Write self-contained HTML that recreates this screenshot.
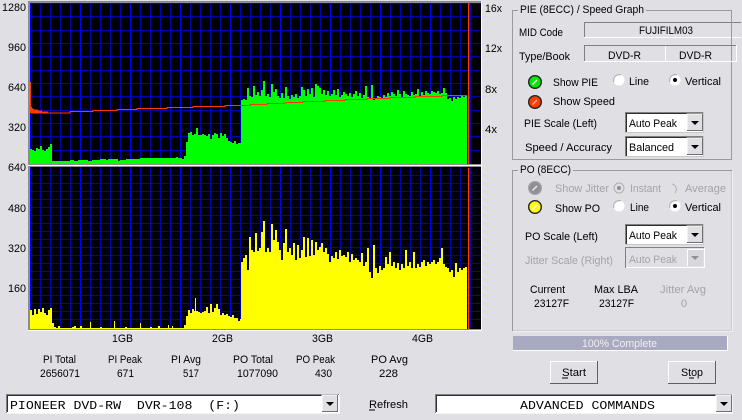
<!DOCTYPE html>
<html><head><meta charset="utf-8"><style>
html,body{margin:0;padding:0;background:#E0DFE3;width:742px;height:420px;overflow:hidden}
svg{display:block}
text{font-family:"Liberation Sans",Arial,sans-serif;font-size:11px;fill:#000}
.g{fill:#a4a4a8}
.m{font-family:"Liberation Mono","Courier New",monospace;font-size:12px}
</style></head><body>
<svg width="742" height="420" viewBox="0 0 742 420" xmlns="http://www.w3.org/2000/svg">
<defs>
<g id="arrow"><path d="M0 0h8l-4 4z" fill="#000"/></g>
<g id="btn"><rect width="16" height="17" fill="#E0DFE3"/><path d="M0 17V0h16" fill="none" stroke="#fff"/><path d="M0 16.5h15.5V0" fill="none" stroke="#707070"/><use href="#arrow" x="4" y="7"/></g>
<g id="combo"><rect width="79" height="21" fill="#fff"/><path d="M.5 21V.5H79" fill="none" stroke="#808080"/><path d="M1.5 20V1.5H78" fill="none" stroke="#303030"/><path d="M78.5 0V20.5H0" fill="none" stroke="#c8c8cc"/><use href="#btn" x="62" y="2"/></g>
<g id="radio"><circle r="5.5" fill="#fff"/><path d="M-5 2A5.5 5.5 0 0 1 2 -5" fill="none" stroke="#a8a8a8" stroke-width="1"/></g>
<g id="gridv"><path stroke="#0000b4" stroke-width="1" fill="none" shape-rendering="crispEdges" d="M40.5 0v161M50.5 0v161M60.5 0v161M70.5 0v161M90.5 0v161M100.5 0v161M110.5 0v161M120.5 0v161M140.5 0v161M150.5 0v161M160.5 0v161M170.5 0v161M190.5 0v161M200.5 0v161M210.5 0v161M220.5 0v161M240.5 0v161M250.5 0v161M260.5 0v161M270.5 0v161M290.5 0v161M300.5 0v161M310.5 0v161M320.5 0v161M340.5 0v161M350.5 0v161M360.5 0v161M370.5 0v161M390.5 0v161M400.5 0v161M410.5 0v161M420.5 0v161M440.5 0v161M450.5 0v161M460.5 0v161M470.5 0v161"/><path stroke="#0000ff" stroke-width="1" fill="none" shape-rendering="crispEdges" d="M30.5 0v161M80.5 0v161M130.5 0v161M180.5 0v161M230.5 0v161M280.5 0v161M330.5 0v161M380.5 0v161M430.5 0v161"/></g>
</defs>

<!-- chart frame -->
<rect x="28" y="1" width="454" height="330" fill="#fff"/>
<rect x="28" y="1" width="453" height="329" fill="#8c8c90"/>
<rect x="30" y="3" width="451" height="161" fill="#000"/>
<rect x="28" y="165" width="453" height="1" fill="#fff"/>
<rect x="30" y="167" width="451" height="162" fill="#000"/>

<!-- top chart grid -->
<use href="#gridv" y="3"/>
<path stroke="#0000b4" fill="none" shape-rendering="crispEdges" d="M30 3.5h451M30 16.5h451M30 30.5h451M30 43.5h451M30 56.5h451M30 70.5h451M30 83.5h451M30 96.5h451M30 110.5h451M30 123.5h451M30 136.5h451M30 150.5h451"/>
<!-- bottom chart grid -->
<use href="#gridv" y="167"/>
<path stroke="#0000b4" fill="none" shape-rendering="crispEdges" d="M30 175.5h451M30 183.5h451M30 191.5h451M30 199.5h451M30 207.5h451M30 215.5h451M30 223.5h451M30 231.5h451M30 239.5h451M30 247.5h451M30 255.5h451M30 263.5h451M30 271.5h451M30 279.5h451M30 287.5h451M30 295.5h451M30 303.5h451M30 311.5h451M30 319.5h451"/>
<rect x="30" y="167" width="1" height="162" fill="#0000ff"/>
<rect x="30" y="3" width="1" height="161" fill="#0000ff"/>

<!-- green PIE -->
<path fill="#00ff00" shape-rendering="crispEdges" d="M30 164V149H32V150H34V151H36V148H38V149H40V146H42V150H44V151H46V149H48V147H50V144H52V161H70V160H74V161H78V160H88V161H92V160H100V159H106V160H108V159H118V161H120V160H126V159H140V158H176V157H178V158H182V159H184V156H186V142h2V133h2V132h2V135h2V134h2V128h2V135h2V135h2V134h2V135h2V136h2V134h2V139h2V135h2V133h2V134h2V138h2V133h2V136h2V134h2V138h2V141h2V142h2V143h2V141h2V144h2V143H241V100h2V99h2V100h2V88h2V96h2V97h2V86h2V95h2V92h2V96h2V90h2V81h2V96h2V94h2V97h2V84h2V92h2V89h2V96h2V98h2V93h2V98h2V87h2V96h2V99h2V95h2V97h2V94h2V98h2V96h2V87h2V90h2V96h2V89h2V94h2V88h2V97h2V84h2V86h2V88h2V94h2V90h2V95h2V91h2V96h2V94h2V90h2V95h2V89h2V97h2V95h2V92h2V94h2V96h2V93h2V97h2V94h2V91h2V96h2V93h2V98h2V95h2V86h2V97h2V99h2V85h2V100h2V98h2V96h2V97h2V99h2V95h2V97h2V93h2V96h2V92h2V94h2V96h2V90h2V94h2V97h2V91h2V94h2V95h2V96h2V92h2V95h2V94h2V89h2V96h2V92h2V95h2V91h2V93h2V94h2V91h2V92h2V93h2V91h2V94h2V93h2V88h2V93h2V99h2V98h2V101h2V97h2V99h2V97h2V98h2V96h2V97h2V96H467V164z"/>
<!-- speed -->
<path fill="none" stroke="#ff3a00" stroke-width="1.3" shape-rendering="crispEdges" d="M30.5 82V113M30.5 107h1v6h1v-4h1v4h1v-3h1v3h1v-3h1v3h1v-2h1v2h1v-2h1v2h1v-1h1v1h1v-1h1v1h1v-1h1v1h3V113H70V111.5H93V110.5H117V109.5H137V108.5H167V107.5H193V106.5H225V105.5H250V104.5H267V103.5H285V102.5H303V101.5H325V100.5H345V99.5H367V98.5H390V97.5H415V96.5H442V95.5H467"/>
<rect x="468" y="3" width="1.4" height="161" fill="#ff3a00"/>

<!-- yellow PO -->
<path fill="#ffff00" shape-rendering="crispEdges" d="M30 329V310H32V315H34V309H36V314H38V309H40V312H42V308H44V313H46V315H48V310H50V308H52V323H54V327H56V328H58V326H60V328H72V327H74V326H76V328H80V326H82V328H90V322H91V328H100V327H102V328H114V321H115V328H125V327H127V328H140V323H141V328H150V327H152V328H158V326H160V328H168V325H169V328H172V326H173V328H184V325H186V316H188V310H190V313H192V309H194V311H195V298H196V311H198V312H200V313H202V312H204V311H206V307H208V313H210V304H212V312H214V308H216V304H218V309H220V315H222V313H224V315H226V314H228V316H230V317H232V315H234V318H236V318H238V321H240V319H241V262H243V258H245V255H247V270H249V237H251V250H253V252H255V233H257V251H259V248H261V232H263V221H265V252H267V248H269V252H271V224H273V240H275V230H277V242H279V250H281V260H283V243H285V229H287V252H289V248H291V255H293V243H295V260H297V245H299V258H301V250H303V237H305V257H307V238H309V256H311V240H313V255H315V242H317V250H319V247H321V243H323V252H325V248H327V254H329V262H331V256H333V258H335V252H337V259H339V250H341V256H343V255H345V257H347V252H349V262H351V254H353V260H355V258H357V260H359V262H361V253H363V266H365V262H367V248H369V272H371V278H373V245H375V268H377V273H379V266H381V270H383V268H385V257H387V264H389V252H391V266H393V262H395V268H397V263H399V270H401V264H403V268H405V250H407V266H409V262H411V268H413V252H415V268H417V264H419V267H421V262H423V260H425V266H427V262H429V264H431V262H433V260H435V264H437V262H439V258H441V248H443V264H445V267H447V268H449V272H451V270H453V277H455V263H457V272H459V268H461V270H463V268H465V267H467V329z"/>
<rect x="468" y="168" width="1.4" height="161" fill="#ff3a00"/>

<!-- axis labels -->
<text x="2" y="11" textLength="24" lengthAdjust="spacingAndGlyphs">1280</text>
<text x="8" y="51" textLength="18" lengthAdjust="spacingAndGlyphs">960</text>
<text x="8" y="91" textLength="18" lengthAdjust="spacingAndGlyphs">640</text>
<text x="8" y="131" textLength="18" lengthAdjust="spacingAndGlyphs">320</text>
<text x="8" y="171" textLength="18" lengthAdjust="spacingAndGlyphs">640</text>
<text x="8" y="212" textLength="18" lengthAdjust="spacingAndGlyphs">480</text>
<text x="8" y="252" textLength="18" lengthAdjust="spacingAndGlyphs">320</text>
<text x="8" y="292" textLength="18" lengthAdjust="spacingAndGlyphs">160</text>
<text x="485" y="12" textLength="17" lengthAdjust="spacingAndGlyphs">16x</text>
<text x="485" y="52" textLength="17" lengthAdjust="spacingAndGlyphs">12x</text>
<text x="485" y="93" textLength="12" lengthAdjust="spacingAndGlyphs">8x</text>
<text x="485" y="133" textLength="12" lengthAdjust="spacingAndGlyphs">4x</text>
<text x="112" y="342" textLength="21" lengthAdjust="spacingAndGlyphs">1GB</text>
<text x="212" y="342" textLength="21" lengthAdjust="spacingAndGlyphs">2GB</text>
<text x="312" y="342" textLength="21" lengthAdjust="spacingAndGlyphs">3GB</text>
<text x="412" y="342" textLength="21" lengthAdjust="spacingAndGlyphs">4GB</text>

<!-- stats -->
<text x="43" y="363" textLength="33" lengthAdjust="spacingAndGlyphs">PI Total</text>
<text x="40" y="377" textLength="40" lengthAdjust="spacingAndGlyphs">2656071</text>
<text x="108" y="363" textLength="34" lengthAdjust="spacingAndGlyphs">PI Peak</text>
<text x="117" y="377" textLength="17" lengthAdjust="spacingAndGlyphs">671</text>
<text x="171" y="363" textLength="30" lengthAdjust="spacingAndGlyphs">PI Avg</text>
<text x="183" y="377" textLength="16" lengthAdjust="spacingAndGlyphs">517</text>
<text x="233" y="363" textLength="40" lengthAdjust="spacingAndGlyphs">PO Total</text>
<text x="237" y="377" textLength="41" lengthAdjust="spacingAndGlyphs">1077090</text>
<text x="296" y="363" textLength="39" lengthAdjust="spacingAndGlyphs">PO Peak</text>
<text x="315" y="377" textLength="17" lengthAdjust="spacingAndGlyphs">430</text>
<text x="371" y="363" textLength="37" lengthAdjust="spacingAndGlyphs">PO Avg</text>
<text x="379" y="377" textLength="19" lengthAdjust="spacingAndGlyphs">228</text>

<!-- group 1 -->
<path d="M518 10.5H512.5V159.5H731.5V10.5H646" fill="none" stroke="#9a9a9e" shape-rendering="crispEdges"/>
<text x="520" y="13" textLength="124" lengthAdjust="spacingAndGlyphs">PIE (8ECC) / Speed Graph</text>
<text x="519" y="36" textLength="44" lengthAdjust="spacingAndGlyphs">MID Code</text>
<rect x="584" y="22" width="157" height="16" fill="#E0DFE3"/>
<path d="M584.5 38V22.5H741" fill="none" stroke="#808080"/><path d="M584 37.5H741" stroke="#fff"/>
<path d="M731.5 22V38" stroke="#9a9a9e"/>
<text x="639" y="34" textLength="54" lengthAdjust="spacingAndGlyphs">FUJIFILM03</text>
<text x="519" y="60" textLength="51" lengthAdjust="spacingAndGlyphs">Type/Book</text>
<path d="M584.5 62V45.5H737" fill="none" stroke="#808080"/>
<path d="M584 61.5H736.5V45M665.5 46V61" fill="none" stroke="#fff"/>
<text x="608" y="59" textLength="33" lengthAdjust="spacingAndGlyphs">DVD-R</text>
<text x="679" y="59" textLength="33" lengthAdjust="spacingAndGlyphs">DVD-R</text>

<circle cx="535" cy="82" r="6.3" fill="#00e800" stroke="#222" stroke-width="1.4"/>
<path d="M532.5 84.5L537 80" stroke="#fff" stroke-width="1.4"/>
<circle cx="535" cy="102" r="6.3" fill="#ff3c00" stroke="#222" stroke-width="1.4"/>
<path d="M532.5 104.5L537 100" stroke="#ffb0a0" stroke-width="1.4"/>
<text x="553" y="86" textLength="45" lengthAdjust="spacingAndGlyphs">Show PIE</text>
<text x="553" y="105" textLength="62" lengthAdjust="spacingAndGlyphs">Show Speed</text>
<use href="#radio" x="619" y="80"/>
<text x="629" y="85" textLength="20" lengthAdjust="spacingAndGlyphs">Line</text>
<use href="#radio" x="675" y="80"/>
<circle cx="675" cy="80" r="2" fill="#000"/>
<text x="685" y="85" textLength="36" lengthAdjust="spacingAndGlyphs">Vertical</text>
<text x="524" y="127" textLength="73" lengthAdjust="spacingAndGlyphs">PIE Scale (Left)</text>
<use href="#combo" x="625" y="112"/>
<text x="629" y="127" textLength="48" lengthAdjust="spacingAndGlyphs">Auto Peak</text>
<text x="525" y="151" textLength="87" lengthAdjust="spacingAndGlyphs">Speed / Accuracy</text>
<use href="#combo" x="625" y="136"/>
<text x="629" y="151" textLength="45" lengthAdjust="spacingAndGlyphs">Balanced</text>

<!-- group 2 -->
<path d="M518 170.5H512.5V330.5H731.5V170.5H573" fill="none" stroke="#9a9a9e" shape-rendering="crispEdges"/>
<path d="M513 331H732V171" fill="none" stroke="#fff" shape-rendering="crispEdges"/>
<text x="520" y="173" textLength="51" lengthAdjust="spacingAndGlyphs">PO (8ECC)</text>
<circle cx="535" cy="188" r="6.3" fill="#909094" stroke="#a0a0a4" stroke-width="1.4"/>
<path d="M532.5 190.5L537 186" stroke="#e8e8e8" stroke-width="1.4"/>
<circle cx="535" cy="207" r="6.3" fill="#ffff00" stroke="#222" stroke-width="1.4"/>
<path d="M532.5 209.5L537 205" stroke="#fff" stroke-width="1.4"/>
<text class="g" x="555" y="192" textLength="54" lengthAdjust="spacingAndGlyphs">Show Jitter</text>
<text x="555" y="212" textLength="45" lengthAdjust="spacingAndGlyphs">Show PO</text>
<circle cx="619" cy="188" r="5" fill="#E0DFE3" stroke="#b0b0b4"/><circle cx="619" cy="188" r="2" fill="#909094"/>
<text class="g" x="630" y="192" textLength="31" lengthAdjust="spacingAndGlyphs">Instant</text>
<path d="M672 184A5.5 5.5 0 0 1 675 193" fill="none" stroke="#b0b0b4"/>
<text class="g" x="685" y="192" textLength="41" lengthAdjust="spacingAndGlyphs">Average</text>
<use href="#radio" x="619" y="206"/>
<text x="630" y="211" textLength="19" lengthAdjust="spacingAndGlyphs">Line</text>
<use href="#radio" x="675" y="206"/>
<circle cx="675" cy="206" r="2" fill="#000"/>
<text x="685" y="211" textLength="36" lengthAdjust="spacingAndGlyphs">Vertical</text>
<text x="525" y="240" textLength="73" lengthAdjust="spacingAndGlyphs">PO Scale (Left)</text>
<use href="#combo" x="625" y="224"/>
<text x="629" y="239" textLength="48" lengthAdjust="spacingAndGlyphs">Auto Peak</text>
<text class="g" x="525" y="264" textLength="88" lengthAdjust="spacingAndGlyphs">Jitter Scale (Right)</text>
<rect x="625" y="247" width="79" height="21" fill="#E0DFE3"/>
<path d="M625.5 268V247.5H704" fill="none" stroke="#808080"/>
<path d="M626 267.5H704.5V248" fill="none" stroke="#fff"/>
<rect x="687" y="249" width="16" height="17" fill="#d8d8dc"/>
<path d="M687.5 266V249.5H703" fill="none" stroke="#fff"/>
<path d="M691 256h8l-4 4z" fill="#909094"/>
<text class="g" x="629" y="263" textLength="48" lengthAdjust="spacingAndGlyphs">Auto Peak</text>
<text x="530" y="293" textLength="35" lengthAdjust="spacingAndGlyphs">Current</text>
<text x="594" y="293" textLength="44" lengthAdjust="spacingAndGlyphs">Max LBA</text>
<text class="g" x="660" y="293" textLength="46" lengthAdjust="spacingAndGlyphs">Jitter Avg</text>
<text x="534" y="307" textLength="35" lengthAdjust="spacingAndGlyphs">23127F</text>
<text x="599" y="307" textLength="35" lengthAdjust="spacingAndGlyphs">23127F</text>
<text class="g" x="681" y="307">0</text>

<!-- progress -->
<rect x="513" y="336" width="214" height="14" fill="#a9a9c1"/>
<path d="M513 350.5H727.5V336" fill="none" stroke="#fff"/>
<text x="582" y="347" textLength="75" lengthAdjust="spacingAndGlyphs" style="fill:#f0f0f0">100% Complete</text>

<!-- buttons -->
<rect x="550" y="361" width="48" height="23" fill="#E0DFE3"/>
<path d="M550.5 384V361.5H598" fill="none" stroke="#fff"/><path d="M550 383.5H597.5V361" fill="none" stroke="#606060"/>
<text x="562" y="376" textLength="24" lengthAdjust="spacingAndGlyphs">Start</text><path d="M562 378h6" stroke="#000"/>
<rect x="668" y="361" width="48" height="23" fill="#E0DFE3"/>
<path d="M668.5 384V361.5H716" fill="none" stroke="#fff"/><path d="M668 383.5H715.5V361" fill="none" stroke="#606060"/>
<text x="681" y="376" textLength="22" lengthAdjust="spacingAndGlyphs">Stop</text><path d="M689 378h5" stroke="#000"/>

<!-- bottom combos -->
<rect x="6" y="394" width="333" height="19" fill="#fff"/>
<path d="M6.5 413V394.5H339" fill="none" stroke="#808080"/><path d="M7.5 412V395.5H338" fill="none" stroke="#303030"/>
<path d="M6 413.5H339.5V394" fill="none" stroke="#f4f4f4"/>
<use href="#btn" x="322" y="395"/>
<text class="m" x="10" y="409" textLength="230" lengthAdjust="spacingAndGlyphs" xml:space="preserve">PIONEER DVD-RW  DVR-108  (F:)</text>
<text x="369" y="408" textLength="39" lengthAdjust="spacingAndGlyphs">Refresh</text><path d="M369 410h6" stroke="#000"/>
<rect x="435" y="394" width="297" height="19" fill="#fff"/>
<path d="M435.5 413V394.5H732" fill="none" stroke="#808080"/><path d="M436.5 412V395.5H731" fill="none" stroke="#303030"/>
<path d="M435 413.5H732.5V394" fill="none" stroke="#f4f4f4"/>
<use href="#btn" x="716" y="395"/>
<text class="m" x="520" y="409" textLength="135" lengthAdjust="spacingAndGlyphs">ADVANCED COMMANDS</text>
</svg>
</body></html>
